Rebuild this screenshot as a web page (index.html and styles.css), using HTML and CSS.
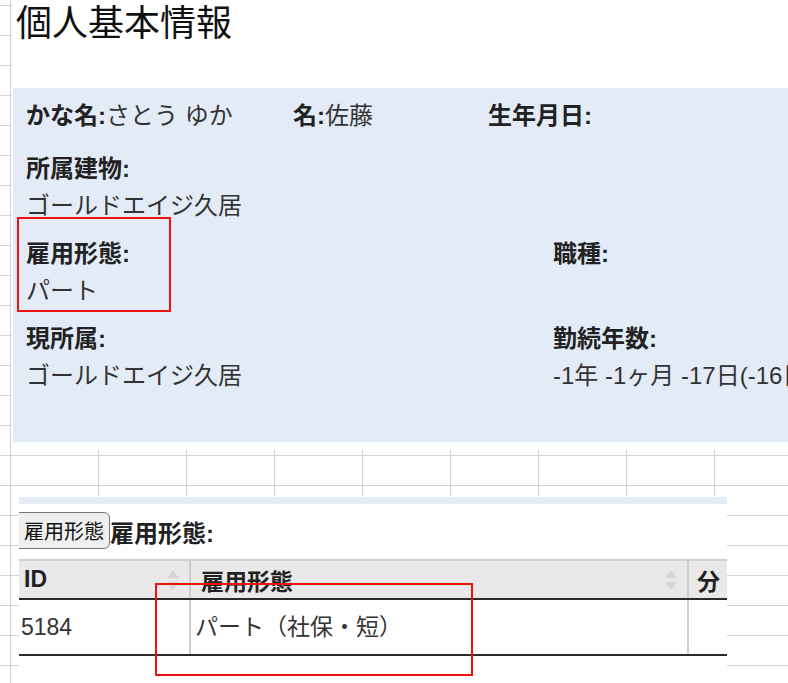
FILE: index.html
```html
<!DOCTYPE html>
<html lang="ja">
<head>
<meta charset="utf-8">
<title>個人基本情報</title>
<link rel="stylesheet" href="styles.css">
</head>
<body>
<div class="sheet">
  <div class="shot shot-top">
    <h1 class="title">個人基本情報</h1>
    <section class="panel">
      <div class="row-top">
        <div class="pair"><b>かな名:</b>さとう ゆか</div>
        <div class="pair"><b>名:</b>佐藤</div>
        <div class="pair"><b>生年月日:</b></div>
      </div>
      <div class="fields">
        <div class="field"><div class="label">所属建物:</div><div class="value">ゴールドエイジ久居</div></div>
        <div class="field"></div>
        <div class="field"><div class="label">雇用形態:</div><div class="value">パート</div></div>
        <div class="field"><div class="label">職種:</div><div class="value"></div></div>
        <div class="field"><div class="label">現所属:</div><div class="value">ゴールドエイジ久居</div></div>
        <div class="field"><div class="label">勤続年数:</div><div class="value nowrap">-1年 -1ヶ月 -17日(-16日)</div></div>
      </div>
    </section>
    <div class="mark mark-top"></div>
  </div>

  <div class="shot shot-bottom">
    <div class="strip"></div>
    <div class="toolbar">
      <button class="btn" type="button">雇用形態</button>
      <span class="tool-label">雇用形態:</span>
    </div>
    <div class="dt">
      <div class="dt-head">
        <div class="th c1"><span class="th-text th-id">ID</span><span class="sort"><i class="up"></i><i class="down"></i></span></div>
        <div class="th c2"><span class="th-text th-kind">雇用形態</span><span class="sort"><i class="up"></i><i class="down"></i></span></div>
        <div class="th c3"><span class="th-text th-min">分</span></div>
      </div>
      <div class="dt-row">
        <div class="td c1 td-id">5184</div>
        <div class="td c2 td-kind">パート（社保・短）</div>
        <div class="td c3"></div>
      </div>
    </div>
    <div class="mark mark-bottom"></div>
  </div>
</div>
</body>
</html>
```

FILE: styles.css
```css
html, body {
  margin: 0;
  padding: 0;
  overflow: hidden;
}

body {
  font-family: "Liberation Sans", "Noto Sans CJK JP", sans-serif;
  color: #222;
}

.sheet {
  position: relative;
  width: 788px;
  height: 683px;
  overflow: hidden;
  background-color: #fff;
  background-image:
    repeating-linear-gradient(to right, #d4d4d4 0 1px, transparent 1px 88px),
    repeating-linear-gradient(to bottom, #d4d4d4 0 1px, transparent 1px 30px);
  background-position: 10px 0, 0 5px;
}

/* pasted screenshots on the spreadsheet canvas */
.shot {
  position: absolute;
  background: #fff;
  overflow: hidden;
}

.shot-top {
  left: 12px;
  top: 0;
  width: 800px;
  height: 450px;
}

.shot-bottom {
  left: 19px;
  top: 497px;
  width: 708px;
  height: 190px;
}

.title {
  margin: 0;
  box-sizing: border-box;
  height: 88px;
  padding: 6px 0 0 4px;
  font-size: 36px;
  line-height: 36px;
  font-weight: normal;
  color: #111;
}

.panel {
  margin-left: 1px;
  background: #e3ebf7;
  padding: 10px 0 48px 13px;
  font-size: 24px;
  color: #333;
}

.panel b,
.panel .label {
  font-weight: bold;
  color: #222;
}

.row-top {
  display: grid;
  grid-template-columns: 267px 195px 1fr;
  line-height: 36px;
  white-space: nowrap;
}

.fields {
  margin-top: 16px;
  display: grid;
  grid-template-columns: 527px 1fr;
  row-gap: 11px;
}

.field {
  min-height: 74px;
}

.label,
.value {
  height: 37px;
  line-height: 37px;
}

.nowrap {
  white-space: nowrap;
}

.mark {
  position: absolute;
  box-sizing: border-box;
  border: 2px solid #f01010;
}

.mark-top {
  left: 5px;
  top: 217px;
  width: 154px;
  height: 95px;
}

.mark-bottom {
  left: 136px;
  top: 86px;
  width: 318px;
  height: 93px;
}

/* bottom screenshot */
.strip {
  height: 7px;
  background: #e3ebf7;
}

.toolbar {
  display: flex;
  align-items: center;
  margin-top: 8px;
  height: 37px;
}

.btn {
  box-sizing: border-box;
  margin-left: -5px;
  width: 96px;
  height: 37px;
  padding: 0 0 0 9px;
  text-align: left;
  font-family: "Liberation Sans", "Noto Sans CJK JP", sans-serif;
  font-size: 20px;
  color: #111;
  background: #efefef;
  border: 1px solid #767676;
  border-radius: 6px;
}

.tool-label {
  font-size: 24px;
  font-weight: bold;
  color: #222;
  padding-top: 1px;
}

.dt {
  margin-top: 10px;
  width: 790px;
  font-size: 23px;
}

.dt-head,
.dt-row {
  display: grid;
  grid-template-columns: 172px 498px 120px;
}

.dt-head {
  border-top: 2px solid #d0d0d0;
  border-bottom: 2px solid #2a2a2a;
  background: #e9e9e9;
}

.dt-row {
  border-bottom: 2px solid #2a2a2a;
}

.c1,
.c2 {
  border-right: 2px solid #cdcdcd;
}

.th {
  box-sizing: border-box;
  height: 37px;
  display: flex;
  align-items: center;
  justify-content: space-between;
  padding-right: 10px;
  font-weight: bold;
  color: #222;
}

.th-id { padding-left: 5px; }
.th-kind { padding-left: 10px; }
.th-min { padding-left: 8px; }

.sort {
  display: flex;
  flex-direction: column;
  gap: 4px;
}

.sort i {
  display: block;
  width: 0;
  height: 0;
  border-left: 6px solid transparent;
  border-right: 6px solid transparent;
}

.sort .up { border-bottom: 8px solid #d6d6d6; }
.sort .down { border-top: 8px solid #d6d6d6; }

.td {
  box-sizing: border-box;
  height: 54px;
  line-height: 54px;
  color: #333;
  white-space: nowrap;
}

.td-id { padding-left: 2px; }
.td-kind { padding-left: 4px; }
```
